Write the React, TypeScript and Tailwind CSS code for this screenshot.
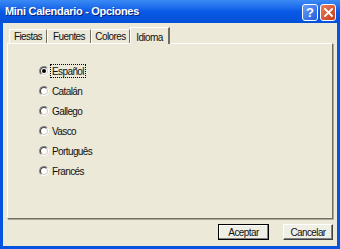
import React from 'react'

const tabs = [
  { label: 'Fiestas', w: 'w-[38px]' },
  { label: 'Fuentes', w: 'w-[44px]' },
  { label: 'Colores', w: 'w-[39px]' },
]

const idiomas = ['Español', 'Catalán', 'Gallego', 'Vasco', 'Português', 'Francés']

function Radio({ checked }: { checked?: boolean }) {
  return (
    <span className="relative flex h-[10px] w-[10px] items-center justify-center rounded-full border border-t-[#808080] border-l-[#808080] border-b-white border-r-white bg-white">
      <span className="absolute inset-0 rounded-full border border-t-[#404040] border-l-[#404040] border-b-[#d4d0c8] border-r-[#d4d0c8]" />
      {checked && <span className="h-[4px] w-[4px] rounded-full bg-black" />}
    </span>
  )
}

export default function App() {
  return (
    <div
      className="flex h-[249px] w-[340px] flex-col overflow-hidden bg-[#0553e1] text-[#111]"
      style={{ fontFamily: '"Liberation Sans", Arial, sans-serif' }}
    >
      {/* Title bar */}
      <div className="flex h-[23px] items-center bg-gradient-to-b from-[#3b8af5] via-[#0a5ae6] to-[#0450d8] pl-[5px] pr-[4px]">
        <span className="flex-1 text-[11px] font-bold tracking-[-0.3px] text-white [text-shadow:1px_1px_0_#0a1f7a]">
          Mini Calendario - Opciones
        </span>
        <div className="flex gap-[2px] pt-[1px]">
          <div className="flex h-[17px] w-[16px] items-center justify-center rounded-[3px] border border-white bg-gradient-to-br from-[#6a9ef9] to-[#1f5bd9] text-[13px] font-bold leading-none text-white">
            ?
          </div>
          <div className="flex h-[17px] w-[16px] items-center justify-center rounded-[3px] border border-white bg-gradient-to-br from-[#ea7d5e] to-[#c5390e]">
            <svg width="9" height="9" viewBox="0 0 9 9">
              <path d="M1 1 L8 8 M8 1 L1 8" stroke="white" strokeWidth="1.8" strokeLinecap="square" />
            </svg>
          </div>
        </div>
      </div>

      {/* Body */}
      <div className="mx-[3px] mb-[3px] flex flex-1 flex-col bg-[#ece9d8] px-[4px] pt-[4px] text-[10px] tracking-[-0.6px]">
        {/* Tabs */}
        <div className="relative z-10 flex h-[17px] items-end pl-[2px]">
          {tabs.map((t) => (
            <div
              key={t.label}
              className={`${t.w} mb-[1px] flex h-[14px] items-center justify-center border-t border-l border-white border-r border-r-[#716f64]`}
            >
              {t.label}
            </div>
          ))}
          <div className="flex h-[17px] w-[40px] items-start justify-center border-t border-l border-white border-r-2 border-r-[#716f64] bg-[#ece9d8] pt-[2px]">
            Idioma
          </div>
        </div>

        {/* Panel */}
        <div className="-mt-[1px] flex h-[176px] flex-col gap-[8px] border border-t-white border-l-white border-r-[#716f64] border-b-[#716f64] pl-[31px] pt-[21px] shadow-[1px_1px_0_#aca899]">
          {idiomas.map((l, i) => (
            <div key={l} className="flex h-[12px] items-center gap-[2px]">
              <Radio checked={i === 0} />
              <span
                className={`flex h-[12px] items-center px-[1px] ${
                  i === 0 ? 'outline outline-1 outline-dotted outline-black' : ''
                }`}
              >
                {l}
              </span>
            </div>
          ))}
        </div>

        {/* Buttons */}
        <div className="mt-[5px] flex justify-end gap-[14px]">
          <button className="flex h-[16px] w-[51px] items-center justify-center border border-black bg-[#f0efe6] shadow-[inset_-1px_-1px_0_#808080,inset_1px_1px_0_white]">
            Aceptar
          </button>
          <button className="flex h-[16px] w-[50px] items-center justify-center border border-t-white border-l-white border-r-[#404040] border-b-[#404040] bg-[#f0efe6] shadow-[inset_-1px_-1px_0_#808080]">
            Cancelar
          </button>
        </div>
      </div>
    </div>
  )
}
